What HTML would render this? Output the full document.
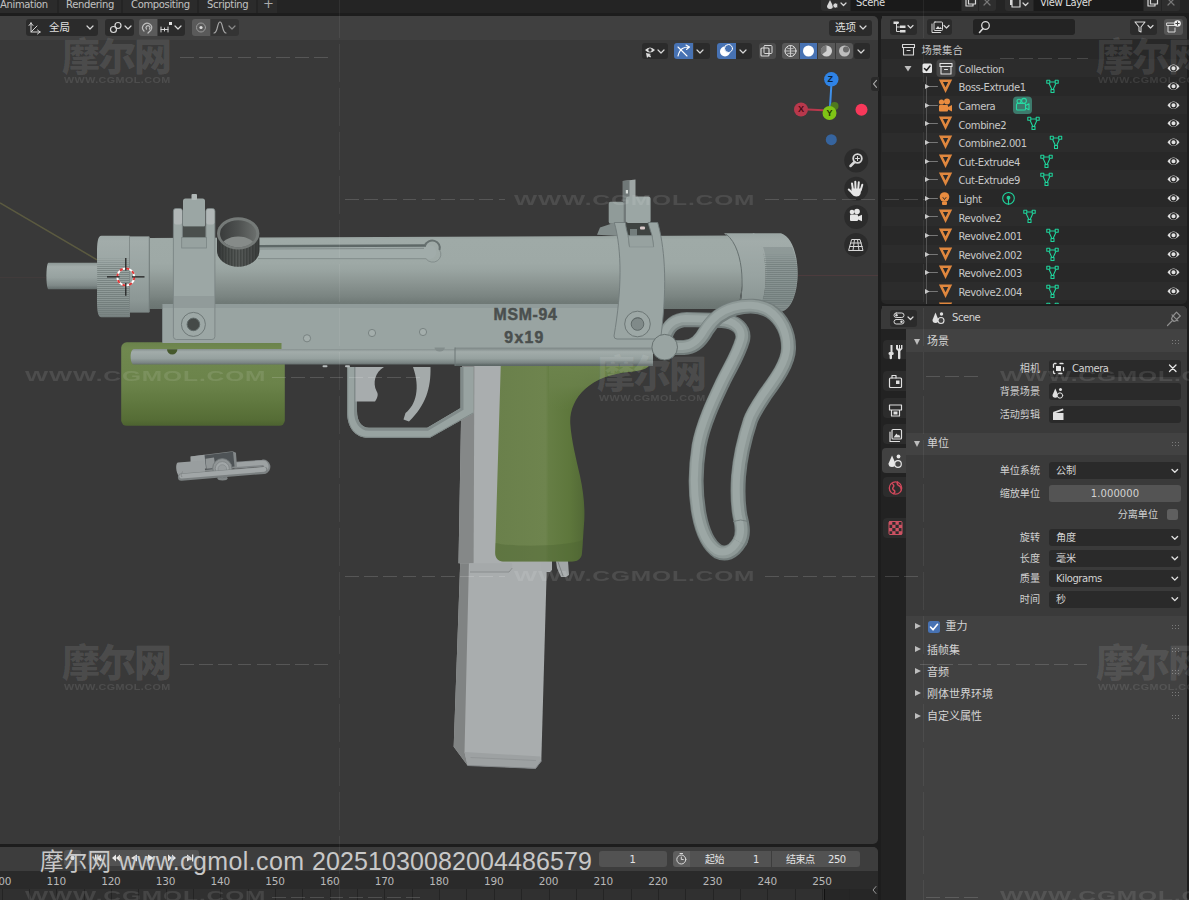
<!DOCTYPE html>
<html lang="zh">
<head>
<meta charset="utf-8">
<title>Blender - MSM-94</title>
<style>
html,body{margin:0;padding:0;}
body{width:1189px;height:900px;overflow:hidden;position:relative;background:#1d1d1d;
  font-family:"DejaVu Sans","Liberation Sans","Noto Sans CJK SC",sans-serif;font-size:11px;color:#d6d6d6;line-height:1;}
.t{position:absolute;white-space:nowrap;}
.box{position:absolute;border-radius:3px;background:#2c2c2c;}
svg{position:absolute;left:0;top:0;overflow:visible;}
svg.ic{fill:none;stroke:#d8d8d8;stroke-width:1.2;stroke-linecap:round;stroke-linejoin:round;}
.chev{position:absolute;width:8px;height:6px;}
/* top bar */
#topbar{position:absolute;left:0;top:0;width:1189px;height:12.800px;background:#242424;}
#topbar .tab{position:absolute;top:0;height:12.800px;background:#2b2b2b;}
#topbar .t{top:0px;font-size:10px;color:#c2c2c2;letter-spacing:-0.35px;}
#topbar .f{position:absolute;top:-6px;height:16.500px;background:#1a1a1a;border-radius:3px;}
#topbar .b{position:absolute;top:-6px;height:16.500px;background:#2e2e2e;border-radius:3px;}
/* viewport */
#vp{position:absolute;left:0;top:16px;width:878px;height:828px;background:#393939;border-radius:0 5px 5px 0;overflow:hidden;}
#vphead{position:absolute;left:0;top:0;width:878px;height:24px;background:rgba(80,80,80,.32);}
/* timeline */
#tl{position:absolute;left:0;top:847px;width:878.400px;height:53px;background:#303030;border-radius:0 5px 0 0;overflow:hidden;}
#tlhead{position:absolute;left:0;top:0;width:878px;height:24px;background:#3d3d3d;}
#tlruler{position:absolute;left:0;top:24px;width:879px;height:18px;background:#2a2a2a;}
#tl .num{position:absolute;top:29px;font-size:10.5px;color:#b8b8b8;transform:translateX(-50%);letter-spacing:-0.2px;}
#tl .vl{position:absolute;top:42px;width:1px;height:11px;background:#242424;}
#tl .fld{position:absolute;top:4px;height:16px;margin-top:0;background:#525252;border-radius:3px;}
#tl .fld .t{top:3.500px;font-size:10px;color:#e4e4e4;}
/* outliner */
#olb{position:absolute;left:880.500px;top:16px;width:306.500px;height:288px;background:#282828;border-radius:5px;overflow:hidden;}
#olb div{height:22.700px;background:#3b3b3b;}
#ol{position:absolute;left:882px;top:16px;width:305px;height:288px;overflow:hidden;border-radius:0 5px 5px 0;}
#olhead{position:absolute;left:0;top:0;width:307px;height:22.700px;background:#3b3b3b;}
.row{position:absolute;left:0;width:307px;height:18.6px;}
.row.alt{background:#2c2c2c;}
.row .t{top:6.200px;font-size:10px;color:#c8c8c8;letter-spacing:-0.4px;}
.row svg{top:0;}
/* properties */
#prb{position:absolute;left:880.500px;top:305.800px;width:306.500px;height:594px;background:#222222;border-radius:5px 5px 0 0;overflow:hidden;}
#prb div{height:23px;background:#393939;}
#pr{position:absolute;left:882px;top:305.800px;width:305px;height:594.200px;background:#414141;border-radius:0 5px 0 0;overflow:hidden;}
#prhead{position:absolute;left:0;top:0;width:307px;height:23px;background:#393939;}
#prtabs{position:absolute;left:0;top:23px;width:24.200px;height:571px;background:#222222;}
#prtabs .tb{position:absolute;left:1px;width:23.200px;height:22px;background:#2c2c2c;border-radius:4px 0 0 4px;}
#prtabs .tb.on{background:#414141;left:0px;width:24.200px;}
.panelh{position:absolute;left:24.200px;width:283px;background:#424242;}
.panelb{position:absolute;left:24.200px;width:283px;background:#3a3a3a;}
.lbl{position:absolute;font-size:10.1px;color:#d0d0d0;text-align:right;width:120px;white-space:nowrap;}
.pt{position:absolute;font-size:11px;color:#d4d4d4;white-space:nowrap;}
.fld{position:absolute;left:167px;width:132px;height:17px;margin-top:-0.5px;border-radius:3px;background:#2a2a2a;}
.fld .t{top:4px;left:7px;font-size:10px;color:#d2d2d2;letter-spacing:-0.45px;}
.c{font-size:10.1px !important;letter-spacing:0 !important;}
.grip{position:absolute;left:289px;width:9px;height:6px;
  background-image:radial-gradient(circle,#7a7a7a 0.7px,transparent 1px);background-size:3px 3px;}
.tri{position:absolute;width:0;height:0;}
.tri.d{border-left:3.5px solid transparent;border-right:3.5px solid transparent;border-top:6px solid #bdbdbd;}
.tri.r{border-top:3.5px solid transparent;border-bottom:3.5px solid transparent;border-left:6px solid #bdbdbd;}
.wm{position:absolute;color:rgba(255,255,255,.10);white-space:nowrap;font-family:"Liberation Sans","Noto Sans CJK SC",sans-serif;}
.wm.big{font-size:38px;font-weight:900;letter-spacing:-2px;font-family:"Noto Sans CJK SC","Liberation Sans",sans-serif;}
.wm.sm{font-size:9.5px;font-weight:bold;letter-spacing:0.4px;transform:scaleX(1.13);transform-origin:0 0;}
.wm.wide{font-size:14px;font-weight:bold;transform:scaleX(1.75);transform-origin:0 0;letter-spacing:0.5px;}
.dash{position:absolute;height:1px;background:repeating-linear-gradient(90deg,rgba(255,255,255,.15) 0 13.700px,transparent 13.700px 19.200px);}
.vdash{position:absolute;top:0;width:1px;height:900px;background:repeating-linear-gradient(180deg,rgba(255,255,255,.06) 0 38px,transparent 38px 44px);}
</style>
</head>
<body>
<div id="topbar">
  <div class="tab" style="left:-4px;width:61px"></div>
  <div class="tab" style="left:59px;width:62px"></div>
  <div class="tab" style="left:123px;width:74px"></div>
  <div class="tab" style="left:199px;width:57px"></div>
  <div class="tab" style="left:258px;width:18.500px"></div>
  <span class="t" style="left:0">Animation</span>
  <span class="t" style="left:66px">Rendering</span>
  <span class="t" style="left:131px">Compositing</span>
  <span class="t" style="left:207px">Scripting</span>
  <span class="t" style="left:263px;font-size:13px;top:-3px;color:#aaa">+</span>
  <div class="b" style="left:821px;width:29px;border-radius:3px 0 0 3px"></div>
  <div class="f" style="left:851px;width:110px;border-radius:0"></div>
  <div class="b" style="left:962px;width:16px;border-radius:0"></div>
  <div class="b" style="left:979px;width:17px;border-radius:0 3px 3px 0"></div>
  <span class="t" style="left:856px;top:-1.800px;color:#ddd">Scene</span>
  <div class="b" style="left:1005px;width:28px;border-radius:3px 0 0 3px"></div>
  <div class="f" style="left:1034px;width:109px;border-radius:0"></div>
  <div class="b" style="left:1144px;width:17px;border-radius:0"></div>
  <div class="b" style="left:1162px;width:18px;border-radius:0 3px 3px 0"></div>
  <span class="t" style="left:1040px;top:-1.800px;color:#ddd">View Layer</span>
  <svg class="ic" width="1189" height="14" viewBox="0 0 1189 14">
    <!-- scene icon -->
    <path d="M827 6 l3 -6 l3 6 a3 3 0 0 1 -6 0z" fill="#d8d8d8" stroke="none"/>
    <circle cx="835.5" cy="5.5" r="2.6" fill="#d8d8d8" stroke="#2e2e2e" stroke-width="0.8"/>
    <path d="M841 3 l2.5 2.5 l2.5 -2.5"/>
    <!-- copy icons -->
    <rect x="966" y="-2" width="7" height="8" /><rect x="968.5" y="-4" width="7" height="8" fill="#2e2e2e"/>
    <path d="M984 -1 l6 6 m0 -6 l-6 6" stroke="#777"/>
    <!-- view layer icon -->
    <rect x="1010" y="-3" width="8" height="8" fill="#d8d8d8" stroke="none"/><rect x="1012" y="-1" width="8" height="8" fill="#2e2e2e"/>
    <path d="M1023 3 l2.5 2.5 l2.5 -2.5"/>
    <rect x="1148" y="-2" width="7" height="8" /><rect x="1150.5" y="-4" width="7" height="8" fill="#2e2e2e"/>
    <path d="M1168 -1 l6 6 m0 -6 l-6 6" stroke="#777"/>
  </svg>
</div>
<div id="vp">
<svg id="gun" width="878" height="828" viewBox="0 16 878 828">
<defs>
  <linearGradient id="gTube" x1="0" y1="236" x2="0" y2="309" gradientUnits="userSpaceOnUse">
    <stop offset="0" stop-color="#98a3a0"/><stop offset="0.05" stop-color="#9faaa7"/><stop offset="0.37" stop-color="#9ea9a6"/><stop offset="0.47" stop-color="#99a4a1"/>
    <stop offset="0.64" stop-color="#8b9592"/><stop offset="0.74" stop-color="#828c89"/><stop offset="0.83" stop-color="#7a8481"/><stop offset="0.9" stop-color="#717b78"/><stop offset="1" stop-color="#6a7471"/>
  </linearGradient>
  <linearGradient id="gCap" x1="0" y1="233" x2="0" y2="317" gradientUnits="userSpaceOnUse">
    <stop offset="0" stop-color="#9aa5a3"/><stop offset="0.1" stop-color="#a2acaa"/><stop offset="0.5" stop-color="#98a3a1"/>
    <stop offset="0.8" stop-color="#8c9795"/><stop offset="1" stop-color="#798382"/>
  </linearGradient>
  <linearGradient id="gBarrel" x1="0" y1="262.8" x2="0" y2="289.3" gradientUnits="userSpaceOnUse">
    <stop offset="0" stop-color="#8c9795"/><stop offset="0.15" stop-color="#a2acaa"/><stop offset="0.55" stop-color="#97a2a0"/>
    <stop offset="0.85" stop-color="#7f8988"/><stop offset="1" stop-color="#636d6c"/>
  </linearGradient>
  <linearGradient id="gRod" x1="0" y1="348.500" x2="0" y2="365" gradientUnits="userSpaceOnUse">
    <stop offset="0" stop-color="#838d8c"/><stop offset="0.2" stop-color="#a2acaa"/><stop offset="0.6" stop-color="#96a19f"/>
    <stop offset="0.88" stop-color="#798382"/><stop offset="1" stop-color="#5e6867"/>
  </linearGradient>
  <linearGradient id="gGreenH" x1="0" y1="342" x2="0" y2="426" gradientUnits="userSpaceOnUse">
    <stop offset="0" stop-color="#6a824b"/><stop offset="0.08" stop-color="#70884f"/><stop offset="0.5" stop-color="#6b834a"/>
    <stop offset="0.72" stop-color="#60783f"/><stop offset="0.92" stop-color="#566d36"/><stop offset="1" stop-color="#4c6230"/>
  </linearGradient>
  <linearGradient id="gGrip" x1="495" y1="0" x2="588" y2="0" gradientUnits="userSpaceOnUse">
    <stop offset="0" stop-color="#6a804b"/><stop offset="0.545" stop-color="#6e844e"/><stop offset="0.575" stop-color="#667e45"/>
    <stop offset="0.8" stop-color="#5e773c"/><stop offset="0.93" stop-color="#556c37"/><stop offset="1" stop-color="#495f30"/>
  </linearGradient>
  <linearGradient id="gMag" x1="455" y1="0" x2="548" y2="0" gradientUnits="userSpaceOnUse">
    <stop offset="0" stop-color="#939798"/><stop offset="0.13" stop-color="#9a9e9f"/><stop offset="0.15" stop-color="#aaaeaf"/>
    <stop offset="0.8" stop-color="#a7abac"/><stop offset="1" stop-color="#a1a5a6"/>
  </linearGradient>
  <linearGradient id="gKnurlFade" x1="0" y1="0" x2="0" y2="1">
    <stop offset="0" stop-color="#fff" stop-opacity="0"/><stop offset="0.25" stop-color="#fff" stop-opacity="0"/>
    <stop offset="0.4" stop-color="#fff" stop-opacity="1"/><stop offset="0.85" stop-color="#fff" stop-opacity="1"/><stop offset="1" stop-color="#fff" stop-opacity="0.3"/>
  </linearGradient>
  <pattern id="pKnurlH" width="4" height="2" patternUnits="userSpaceOnUse"><rect width="4" height="1" fill="#636d6c" fill-opacity="0.55"/></pattern>
  <pattern id="pKnurlV" width="1.500" height="4" patternUnits="userSpaceOnUse"><rect width="0.700" height="4" fill="#2c2f2e" fill-opacity="0.65"/></pattern>
  <mask id="mKn1" maskUnits="userSpaceOnUse" x="90" y="230" width="50" height="90"><rect x="90" y="236" width="50" height="82" fill="url(#gKnurlFade)"/></mask>
  <mask id="mKn2" maskUnits="userSpaceOnUse" x="750" y="230" width="50" height="90"><rect x="750" y="233" width="50" height="79" fill="url(#gKnurlFade)"/></mask>
  <linearGradient id="gKnobSide" x1="217" y1="0" x2="259.500" y2="0" gradientUnits="userSpaceOnUse">
    <stop offset="0" stop-color="#353838"/><stop offset="0.25" stop-color="#4c504e"/><stop offset="0.5" stop-color="#5c605e"/><stop offset="0.8" stop-color="#4b4e4d"/><stop offset="1" stop-color="#3a3d3c"/>
  </linearGradient>
  <linearGradient id="gKnobIn" x1="220" y1="0" x2="257" y2="0" gradientUnits="userSpaceOnUse">
    <stop offset="0" stop-color="#3a3c3c"/><stop offset="0.5" stop-color="#4e5150"/><stop offset="1" stop-color="#6c706e"/>
  </linearGradient>
</defs>
<!-- axis / helper lines -->
<line x1="0" y1="277.500" x2="46" y2="277.500" stroke="#413b3b" stroke-width="1"/>
<line x1="798" y1="275.500" x2="878" y2="275.500" stroke="#4c3b3d" stroke-width="1"/>
<line x1="0" y1="202.900" x2="97" y2="259.800" stroke="#5b5a40" stroke-width="1.500"/>
<!-- wire stock: far strand (behind) -->
<g fill="none" stroke-linecap="round" stroke-linejoin="round">
  <path id="wfar" d="M665 337 C668 327 674 320 687 319.500 L722 320.500 C736 321.500 745 329 742.500 340 C738 356 729 369 722.500 383 C714 401 703 424 699 446 C695.500 468 695 492 699 514 C702 530 708 545 718 551.500 C725 555 733 553 739.500 542 L740.500 540.300"/>
</g>
<use href="#wfar" fill="none" stroke="#737d7c" stroke-width="15" stroke-linecap="round"/>
<use href="#wfar" fill="none" stroke="#8e9997" stroke-width="12" stroke-linecap="round" transform="translate(-0.800,-0.500)"/>
<use href="#wfar" fill="none" stroke="#9ca7a5" stroke-width="7" stroke-linecap="round" transform="translate(-1.800,-1)"/>
<!-- barrel tip -->
<path d="M48.500 262.800 L98 262.800 L98 289.300 L48.500 289.300 C45.700 289.300 45.700 262.800 48.500 262.800 Z" fill="url(#gBarrel)"/>
<!-- tube sections -->
<path d="M149 238 L735 235.600 L745 270 L738 309 L149 309 Z" fill="url(#gTube)"/>
<!-- front ring -->
<rect x="129.300" y="236.400" width="20" height="76.200" fill="url(#gCap)"/>
<path d="M149.300 237 V312" stroke="#717b7a" stroke-width="1" fill="none"/>
<!-- front knurled cap -->
<path d="M101.500 235.800 L129.500 235.800 L129.500 317.300 L101.500 317.300 C95.500 317.300 97.200 300 97.200 276.500 C97.200 253 95.500 235.800 101.500 235.800 Z" fill="url(#gCap)"/>
<path d="M101.500 235.800 L129.500 235.800 L129.500 317.300 L101.500 317.300 C95.500 317.300 97.200 300 97.200 276.500 C97.200 253 95.500 235.800 101.500 235.800 Z" fill="url(#pKnurlH)" mask="url(#mKn1)"/>
<path d="M129.500 236.500 V317" stroke="#7e8887" stroke-width="0.800" fill="none"/>
<!-- lower receiver top overlap line -->
<path d="M162.500 304.600 H660" stroke="#6e7877" stroke-width="1" fill="none" stroke-opacity="0.700"/>
<!-- slot -->
<path d="M258 246 L426 245.400 A7.500 7.200 0 1 1 426 258.700 L258 258.600 Z" fill="#a1acaa"/>
<path d="M258 246.300 L426 245.500" fill="none" stroke="#5e6867" stroke-width="2.600"/>
<path d="M425 245.600 A7.500 7.200 0 0 1 439.500 250" fill="none" stroke="#677170" stroke-width="2"/>
<path d="M258 258.600 L426 258.700 A7.500 7.200 0 0 0 439.500 250" fill="none" stroke="#808a89" stroke-width="0.900"/>
<path d="M258 249 L424 248.400" fill="none" stroke="#848e8d" stroke-width="1.200"/>
<!-- rear smooth ring -->
<path d="M724 233.200 L754 233.200 C769 245 769 300 757.500 311.400 L738.500 309 C744 300 746.500 250 724 233.200 Z" fill="url(#gCap)"/>
<path d="M726 234 C746.500 250 744 300 737 308.500" stroke="#677170" stroke-width="1" fill="none"/>
<!-- rear knurled cap -->
<path d="M752.500 233.200 L781 233.200 C803 240 803 305 782.200 311.400 L757 311.400 C769 300 769 245 752.500 233.200 Z" fill="url(#gCap)"/>
<path d="M752.500 233.200 L781 233.200 C803 240 803 305 782.200 311.400 L757 311.400 C769 300 769 245 752.500 233.200 Z" fill="url(#pKnurlH)" mask="url(#mKn2)"/>
<path d="M763 247 C768 260 768 285 761 304 L790 304 C799 290 799 262 792 247 Z" fill="#717b7a" fill-opacity="0.350"/>
<!-- magazine -->
<path d="M460.300 560 L547 560 L541.300 761 L535.500 768.400 L467.600 765.500 L453.700 746.700 Z" fill="#a9adae"/>
<path d="M460.300 560 L469 560 L464.500 752 L467.600 765.500 L453.700 746.700 Z" fill="#808383"/>
<path d="M464.500 752 L540.500 756.500 L541.300 761 L535.500 768.400 L467.600 765.500 Z" fill="#9da1a2"/>
<path d="M467.600 765.500 L535.500 768.400 L541.300 761" fill="none" stroke="#818587" stroke-width="1"/>
<path d="M470.500 757.500 L536 760.500" fill="none" stroke="#8e9293" stroke-width="0.800"/>
<!-- mag well / grip frame -->
<path d="M462 366 L501 366 L501 572 L470 572 L470 563.300 L458.500 563.300 Z" fill="#aaaeaf"/>
<path d="M462 366 L474.400 366 L473.600 563.300 L458.500 563.300 Z" fill="#858888"/>
<path d="M470 563.300 L512 563.300 L512.300 568 L509 572 L470 572 Z" fill="#a5a9aa"/>
<path d="M470 572 L509 572 L512.300 568" fill="none" stroke="#838788" stroke-width="0.800"/>
<!-- small tabs below grip -->
<path d="M541 561 h11 v9 l-2 2 h-7 l-2 -2z" fill="#a8acad"/>
<path d="M556 561 h12 l1 14 l-3 2 h-5 l-4 -9z" fill="#a2a6a7"/><path d="M558 562 l5 14" stroke="#7e8283" stroke-width="1" fill="none"/>
<!-- green pistol grip -->
<path d="M500.800 364 L650 364 C648 369 640 371 628 372 C612 373.500 596 379 585 389 C574 399 569.500 412 570.300 424 C571.500 441 576 458 580 476 C583 490 585 504 584.300 520 L582 553 C581.500 558.500 578 561.500 572 561.500 L503 561.500 C498 561.500 495 558 495.200 552 Z" fill="url(#gGrip)"/>
<clipPath id="cGrip"><path d="M500.800 364 L650 364 C648 369 640 371 628 372 C612 373.500 596 379 585 389 C574 399 569.500 412 570.300 424 C571.500 441 576 458 580 476 C583 490 585 504 584.300 520 L582 553 C581.500 558.500 578 561.500 572 561.500 L503 561.500 C498 561.500 495 558 495.200 552 Z"/></clipPath>
<linearGradient id="gTang" x1="0" y1="366" x2="0" y2="410" gradientUnits="userSpaceOnUse"><stop offset="0" stop-color="#6c834c" stop-opacity="1"/><stop offset="0.45" stop-color="#6a814a" stop-opacity="0.9"/><stop offset="1" stop-color="#667e45" stop-opacity="0"/></linearGradient>
<rect x="549" y="364" width="102" height="48" fill="url(#gTang)" clip-path="url(#cGrip)"/>
<path d="M584.300 520 L582 553 C581.500 558.500 578 561.500 572 561.500 L503 561.500 C498 561.500 495 558 495.200 552 L495.600 543 C510 547 565 547 583 540Z" fill="#4a6030" fill-opacity="0.350"/>
<!-- trigger guard -->
<path d="M347.200 367 L347.200 413 C347.200 427 355 437.800 368 437.800 L430 437.800 L473.600 413.300 L473.600 367 L460.500 367 L460.500 408 L427.200 427.800 L369 427.800 C361 427.800 357 421 357 411 L357 367 Z" fill="#98a3a1"/>
<path d="M462 367 L462 409 L427.600 429.300 L369 429.300 C360 429.300 355.500 421 355.500 411 L355.500 367" fill="none" stroke="#818b8a" stroke-width="3"/>
<path d="M347.700 367 L347.700 413 C347.700 427 355 437.300 368 437.300 L430 437.300 L473.100 413" fill="none" stroke="#7e8887" stroke-width="1"/>
<!-- inner plate with round cutout + trigger -->
<path d="M355.500 367 L384 367 C375 372 372.500 383 376.500 391 C378.500 394 378 397 375 401.500 L355.500 401.500 Z" fill="#a7acad"/>
<path d="M413 367 L430.500 367 C431 388 426 405 409 421.500 L403.500 419.500 L405.500 413 C416 405 420.500 388 413 367 Z" fill="#a4aaaa"/>
<!-- tiny studs -->
<rect x="322.500" y="365.300" width="5" height="2" rx="1" fill="#b6bcbc"/><rect x="345" y="365.300" width="5" height="2" rx="1" fill="#b6bcbc"/>
<!-- green handguard -->
<rect x="121.200" y="342.300" width="163.600" height="83.500" rx="5.500" fill="url(#gGreenH)"/>
<!-- lower receiver -->
<path d="M162.500 304 L660 304 L660 349.500 L281.500 349.500 L281.500 343 L162.500 343 Z" fill="#99a4a2"/>
<path d="M162.500 304 L660 304 L660 308 L162.500 308 Z" fill="#8b9694" fill-opacity="0.600"/>
<path d="M162.500 304.500 V343" stroke="#808a89" stroke-width="1" fill="none"/>
<!-- pins -->
<g fill="#a4aeac" stroke="#798382" stroke-width="1"><circle cx="307" cy="338.300" r="3.600"/><circle cx="372" cy="333" r="3.600"/><circle cx="423" cy="332" r="3.600"/></g>
<!-- rod -->
<path d="M134 349 L455 349 L455 347.500 L653 347.500 L653 366 L455 366 L455 364.600 L134 364.600 C129.500 364.600 129.500 349 134 349 Z" fill="url(#gRod)"/>
<path d="M455 347.500 V366" stroke="#6d7776" stroke-width="1" fill="none"/>
<path d="M167 349.300 a5.200 5.200 0 0 0 10.400 0z" fill="#46592c"/>
<path d="M434.500 347.500 a5.200 4 0 0 0 10.400 0z" fill="#838d8c"/>
<!-- engraved text -->
<text x="525.500" y="319.700" text-anchor="middle" font-family="'Liberation Sans',sans-serif" font-weight="bold" font-size="15.800" letter-spacing="0.700" fill="#4a4f4e" stroke="#4a4f4e" stroke-width="0.500">MSM-94</text>
<text x="524.500" y="342.800" text-anchor="middle" font-family="'Liberation Sans',sans-serif" font-weight="bold" font-size="15.800" letter-spacing="1.300" fill="#4a4f4e" stroke="#4a4f4e" stroke-width="0.500">9x19</text>
<!-- front sight -->
<rect x="183" y="198.600" width="22" height="29" rx="2.500" fill="#9ba6a4"/>
<rect x="191.500" y="194" width="5.500" height="6" rx="1" fill="#b0b8b7"/>
<rect x="182" y="226.400" width="24" height="12" fill="#4a4f4d"/>
<path d="M173.400 211 a2.500 2.500 0 0 1 2.500 -2.500 h4 a2.500 2.500 0 0 1 2.500 2.500 V238 h23.500 V211 a2.500 2.500 0 0 1 2.500 -2.500 h4 a2.500 2.500 0 0 1 2.500 2.500 V336.500 a3 3 0 0 1 -3 3 H176.400 a3 3 0 0 1 -3 -3 Z" fill="#9ca7a5"/>
<path d="M173.400 211 a2.500 2.500 0 0 1 2.500 -2.500 h4 a2.500 2.500 0 0 1 2.500 2.500 V238 h23.500 V211 a2.500 2.500 0 0 1 2.500 -2.500 h4 a2.500 2.500 0 0 1 2.500 2.500 V336.500 a3 3 0 0 1 -3 3 H176.400 a3 3 0 0 1 -3 -3 Z" fill="none" stroke="#7b8584" stroke-width="0.900"/>
<rect x="174" y="209" width="8" height="15.500" rx="2" fill="#b1b7b7"/><rect x="206.400" y="209" width="8" height="15.500" rx="2" fill="#b1b7b7"/>
<rect x="181.700" y="237.500" width="24.800" height="10.500" fill="#97a2a0" stroke="#7b8584" stroke-width="0.800"/>
<path d="M174 296 H214.400 V308 H174Z" fill="#7e8887" fill-opacity="0.350"/>
<circle cx="193.400" cy="324.400" r="12" fill="#9da8a6" stroke="#6f7978" stroke-width="1"/>
<circle cx="193.400" cy="324.400" r="6.300" fill="#454a48" stroke="#616b6a" stroke-width="1"/>
<!-- charging knob -->
<path d="M217 233.400 V250.700 A21.200 16.100 0 0 0 259.400 250.700 V233.400 Z" fill="url(#gKnobSide)"/>
<path d="M217 233.400 V250.700 A21.200 16.100 0 0 0 259.400 250.700 V233.400 Z" fill="url(#pKnurlV)"/>
<ellipse cx="238.200" cy="233.400" rx="21.200" ry="16.100" fill="#757a78"/>
<ellipse cx="238.200" cy="233.800" rx="18.200" ry="13.500" fill="url(#gKnobIn)"/>
<clipPath id="cKnob"><ellipse cx="238.200" cy="233.800" rx="18.200" ry="13.500"/></clipPath>
<ellipse cx="238.200" cy="248" rx="17.500" ry="11.500" fill="#868b89" clip-path="url(#cKnob)"/>
<!-- rear sight -->
<path d="M622.800 181 L635.500 179.600 L635.500 222 L622.800 222 Z" fill="#9da5a4"/>
<path d="M622.800 181 L629.500 180.300 L629.500 222 L622.800 222 Z" fill="#707878"/>
<rect x="625.800" y="190" width="2.200" height="3.500" fill="#d5dad7"/>
<rect x="608.700" y="201.800" width="15" height="22" rx="2" fill="#909b99"/>
<rect x="625.900" y="196.400" width="24.700" height="26.500" rx="2.500" fill="#9ba6a4"/>
<path d="M597 234.800 L600 227.500 L615 222.500 L618 236 Z" fill="#828c8b"/>
<path d="M624 223 H650 V237 H624Z" fill="#3e4341"/>
<rect x="640" y="226.500" width="5" height="3" rx="1" fill="#d9c9c9"/><rect x="630" y="229" width="7" height="7" fill="#737d7c"/>
<path d="M614.300 222.500 L625.400 222.500 C626 228 627 232 628.200 235.600 L629.500 246.700 L653.600 246.700 L652 235.600 C650.500 231 649 226 648 222.500 L657.700 222.500 C664 245 668 280 661 336 a3 3 0 0 1 -3 3 L617 339 a3 3 0 0 1 -3 -3 C622 290 622 250 614.300 222.500 Z" fill="#9aa5a3" stroke="#717b7a" stroke-width="0.900"/>
<path d="M629.500 246.700 L628.200 235.600 H652 L653.600 246.700" fill="#97a2a0" stroke="#7b8584" stroke-width="0.800"/>
<circle cx="637.500" cy="324" r="12.800" fill="#9da8a6" stroke="#6d7776" stroke-width="1"/>
<circle cx="637.500" cy="324" r="6.300" fill="#808a89" stroke="#616b6a" stroke-width="1"/>
<path d="M632 322 a6.300 6.300 0 0 1 11 -2 a7 7 0 0 0 -11 2z" fill="#5e6867"/>
<!-- wire stock: near strand -->
<path id="wnear" d="M663 347.500 L684 347.500 C695 347 701 340 706 331 C712 321 722 312 735 308.300 C746 305.300 760 305 770 311 C782 319 789 333 788.500 349 C788 364 775 381 764.400 395.800 C757 407 752.500 414 750.400 420.600 C744 440 740 458 738.500 476.600 C737.500 492 738 505 740 516 C741.500 523 744.800 533 739.500 542" fill="none"/>
<use href="#wnear" fill="none" stroke="#737d7c" stroke-width="15" stroke-linecap="butt"/>
<use href="#wnear" fill="none" stroke="#8e9997" stroke-width="12" stroke-linecap="butt" transform="translate(-0.800,-0.500)"/>
<use href="#wnear" fill="none" stroke="#9ca7a5" stroke-width="7" stroke-linecap="butt" transform="translate(-1.800,-1)"/>
<path d="M733 521.500 q7.500 -3 15.500 0" stroke="#707a79" stroke-width="0.900" fill="none"/>
<circle cx="664.700" cy="347.200" r="12.800" fill="#99a4a2" stroke="#687271" stroke-width="1"/>
<!-- 3d cursor -->
<g fill="none">
  <circle cx="125.800" cy="276.900" r="8.500" stroke="#fff" stroke-width="2"/>
  <circle cx="125.800" cy="276.900" r="8.500" stroke="#e03a3a" stroke-width="2" stroke-dasharray="3.300 3.370"/>
  <path d="M107 276.900 H119.500 M132 276.900 H144.500 M125.800 258 V270.500 M125.800 283 V295.700" stroke="#1c1c1c" stroke-width="1.200"/>
</g>
<!-- sling swivel (loose part) -->
<ellipse cx="222.500" cy="478.300" rx="5" ry="2.200" fill="#7f8485"/>
<path d="M236 465.300 L262.500 463.200 A3.600 3.600 0 0 1 264 470.300" fill="none" stroke="#808587" stroke-width="7" stroke-linecap="round"/>
<path d="M236 464.800 L262.500 462.700 A3.600 3.600 0 0 1 264.300 469.500" fill="none" stroke="#9da2a3" stroke-width="4.500" stroke-linecap="round"/>
<path d="M190.600 456.500 L232.500 451.200 L236 452.800 L237 468 L204 472 L190.600 468 Z" fill="#838889"/>
<path d="M203.500 455.500 L233 451.800 L234.500 466.500 L205 470 Z" fill="#4e5356"/>
<path d="M190.600 456.500 L204.500 454.800 L206 468.500 L191 468.500 Z" fill="#9ca1a2"/>
<path d="M205.500 458.800 L214 457.600 L215.500 468 L206.500 468.800 Z" fill="#919697"/>
<circle cx="222.300" cy="468.200" r="9.600" fill="#909596" stroke="#717677" stroke-width="0.900"/>
<circle cx="222.300" cy="468.600" r="7" fill="#a1a6a7" stroke="#7e8384" stroke-width="0.800"/>
<circle cx="222.300" cy="469" r="4.300" fill="#979c9d" stroke="#838889" stroke-width="0.700"/>
<path d="M178 462.500 L204 460.500 L205.500 476 L183 478.500 C176 478.500 174.500 463 178 462.500 Z" fill="#999e9f"/>
<path d="M181.500 477.200 L264 470.300" fill="none" stroke="#7b8081" stroke-width="7.200" stroke-linecap="round"/>
<path d="M181.500 476.300 L264 469.400" fill="none" stroke="#a1a6a7" stroke-width="4.600" stroke-linecap="round"/>
<path d="M183 471.500 C181 473 180.500 475 182 477" fill="none" stroke="#828788" stroke-width="0.900"/>
</svg>
<div id="vphead"></div>
</div><!-- /vp -->
<!-- viewport header widgets (page coords) -->
<div class="box" style="left:26px;top:19px;width:72px;height:17px;background:#2b2b2b"></div>
<span class="t" style="left:49px;top:22px;font-size:10.5px;color:#e0e0e0">全局</span>
<div class="box" style="left:105px;top:19px;width:29px;height:17px;background:#2b2b2b"></div>
<div class="box" style="left:139px;top:19px;width:18px;height:17px;background:#5a5a5a;border-radius:3px 0 0 3px"></div>
<div class="box" style="left:158px;top:19px;width:27px;height:17px;background:#2b2b2b;border-radius:0 3px 3px 0"></div>
<div class="box" style="left:192px;top:19px;width:18px;height:17px;background:#5a5a5a;border-radius:3px 0 0 3px"></div>
<div class="box" style="left:211px;top:19px;width:28px;height:17px;background:#343434;border-radius:0 3px 3px 0"></div>
<div class="box" style="left:829px;top:20px;width:43px;height:16px;background:#2b2b2b"></div>
<span class="t" style="left:835px;top:22px;font-size:10.5px;color:#e0e0e0">选项</span>
<!-- second row -->
<div class="box" style="left:642px;top:43px;width:26px;height:16px;background:#2b2b2b"></div>
<div class="box" style="left:674px;top:43px;width:19px;height:16px;background:#4772b3;border-radius:3px 0 0 3px"></div>
<div class="box" style="left:694px;top:43px;width:16px;height:16px;background:#2b2b2b;border-radius:0 3px 3px 0"></div>
<div class="box" style="left:717px;top:43px;width:19px;height:16px;background:#4772b3;border-radius:3px 0 0 3px"></div>
<div class="box" style="left:736px;top:43px;width:16px;height:16px;background:#2b2b2b;border-radius:0 3px 3px 0"></div>
<div class="box" style="left:758.500px;top:43px;width:17px;height:16px;background:#4c4c4c"></div>
<div class="box" style="left:782px;top:43px;width:17px;height:16px;background:#585858;border-radius:3px 0 0 3px"></div>
<div class="box" style="left:800px;top:43px;width:17px;height:16px;background:#4772b3;border-radius:0"></div>
<div class="box" style="left:818px;top:43px;width:17px;height:16px;background:#585858;border-radius:0"></div>
<div class="box" style="left:836px;top:43px;width:17px;height:16px;background:#585858;border-radius:0 3px 3px 0"></div>
<div class="box" style="left:853.500px;top:43px;width:16.500px;height:16px;background:#2b2b2b"></div>
<div class="box" style="left:871px;top:77px;width:8px;height:13.500px;background:#2a2a2a;border-radius:3px 0 0 3px"></div>
<svg class="ic" width="878" height="300" viewBox="0 0 878 300">
  <!-- header row 1 icons -->
  <path d="M31 23 v9 h9 M31 23 l-2 2.5 M31 23 l2 2.5 M40 32 l-2.5 -2 M40 32 l-2.5 2 M31 32 l6 -6" stroke-width="1"/>
  <path d="M87 26 l3 3 l3 -3"/>
  <circle cx="113.5" cy="29.5" r="3"/><circle cx="118" cy="25.5" r="3"/>
  <path d="M125 26 l3 3 l3 -3"/>
  <path d="M144 31 a4.5 4.5 0 1 1 7 -1 l-3 3 M146.5 29 a2 2 0 1 1 3 0" stroke="#bdbdbd"/>
  <path d="M161 27 v5 M168 27 v5 M161 29.500 h7 M164.500 28 v3" stroke-width="1"/><rect x="169" y="22" width="3" height="3" fill="#e0e0e0" stroke="none"/>
  <path d="M175 26 l3 3 l3 -3"/>
  <circle cx="201" cy="27.5" r="4.5" stroke="#9a9a9a" stroke-width="1"/><circle cx="201" cy="27.5" r="1.6" fill="#ddd" stroke="none"/>
  <path d="M214 33 c4 0 3 -11 6 -11 s2 11 6 11" stroke="#a8a8a8"/>
  <path d="M229 26 l3 3 l3 -3" stroke="#8a8a8a"/>
  <path d="M860 26 l3 3 l3 -3"/>
  <!-- row 2 icons -->
  <path d="M645 50 q5 -5 10 0 q-5 5 -10 0z" fill="#ddd" stroke="none"/><circle cx="650" cy="50" r="1.7" fill="#2b2b2b" stroke="none"/>
  <path d="M646 53 l1 5 l1.500 -1.500 l2 1 l0.500 -1.500 l-1.500 -1 l1.500 -1z" fill="#ddd" stroke="none"/>
  <path d="M658 50 l3 3 l3 -3"/>
  <path d="M678 56 c2 -8 6 -9 11 -9 M686 45 l3.500 2 l-3 2.500 M678 47 l9 9" stroke="#fff" stroke-width="1.1"/>
  <path d="M697 50 l3 3 l3 -3"/>
  <circle cx="725" cy="51.5" r="5" fill="#fff" stroke="none"/><circle cx="728.500" cy="48.500" r="4" fill="#4772b3" stroke="#fff" stroke-width="1"/>
  <path d="M740 50 l3 3 l3 -3"/>
  <rect x="761" y="48" width="8" height="8" rx="1"/><rect x="764" y="45.500" width="8" height="8" rx="1" stroke-width="1"/>
  <circle cx="790.5" cy="51" r="5.500" stroke="#e0e0e0" stroke-width="1"/><path d="M785 51 h11 M790.500 45.500 v11 M786.500 47.500 q4 3 8 0 M786.500 54.500 q4 -3 8 0" stroke-width="0.8"/>
  <circle cx="808.500" cy="51" r="5.500" fill="#fff" stroke="none"/>
  <circle cx="826.500" cy="51" r="5.500" fill="#d0d0d0" stroke="none"/><path d="M826.500 51 L826.500 45.500 A5.500 5.500 0 0 0 822 54.500 z" fill="#777" stroke="none"/>
  <circle cx="844.500" cy="51" r="5.500" fill="#bdbdbd" stroke="none"/><circle cx="846" cy="49.500" r="3" fill="#6a6a6a" stroke="none"/>
  <path d="M858 50 l3 3 l3 -3"/>
  <!-- gizmo -->
  <line x1="831.3" y1="86" x2="830" y2="107" stroke="#3f8fe8" stroke-width="2"/>
  <line x1="808" y1="109.500" x2="823" y2="110.300" stroke="#b8384c" stroke-width="2"/>
  <circle cx="834.500" cy="106" r="4" fill="#4f7a1e" stroke="none"/>
  <circle cx="831.3" cy="79.300" r="7.200" fill="#2f83e6" stroke="none"/>
  <circle cx="829.500" cy="113" r="7" fill="#7fc416" stroke="none"/>
  <circle cx="801" cy="109.500" r="7" fill="#b8384c" stroke="none"/>
  <circle cx="861.500" cy="109.800" r="6" fill="#f8385a" stroke="none"/>
  <circle cx="831.3" cy="139.700" r="5.500" fill="#36649e" stroke="none"/>
  <!-- nav buttons -->
  <g fill="#2b2b2b" stroke="none"><circle cx="856.200" cy="160.500" r="12"/><circle cx="856.200" cy="188.800" r="12"/><circle cx="856.200" cy="217" r="12"/><circle cx="856.200" cy="245" r="12"/></g>
  <circle cx="857.500" cy="158.500" r="4.300" stroke-width="1.800"/><path d="M854.500 162 l-4 4" stroke-width="2.500"/><path d="M855.500 158.500 h4 M857.500 156.500 v4" stroke-width="1"/>
  <g stroke="#e6e6e6" stroke-width="2" stroke-linecap="round"><path d="M853 190 L852 183.500 M855.500 189 L855.300 181.800 M858.200 189 L858.800 182.300 M860.600 190.500 L862.300 184.800 M852.500 193 L848.800 189.500"/></g><path d="M851.500 188.500 h9.800 l-0.800 5.500 q-1 2.500 -4 2.500 q-3.500 0 -5 -3z" fill="#e6e6e6" stroke="none"/>
  <rect x="850" y="214.500" width="8" height="6.500" rx="1" fill="#e6e6e6" stroke="none"/><path d="M858 216.500 l4 -1.800 v6.500 l-4 -1.800z" fill="#e6e6e6" stroke="none"/><circle cx="852" cy="212" r="2.300" fill="#e6e6e6" stroke="none"/><circle cx="857" cy="211.500" r="2.800" fill="#e6e6e6" stroke="none"/>
  <path d="M852 239.500 h8 l3 11 h-14 z M850.800 243 h10.500 M849.800 246.500 h12.500 M854.500 239.500 l-1.500 11 M857.500 239.500 l1.500 11" stroke-width="1"/>
  <path d="M876.500 80.300 l-3 3.500 l3 3.500" stroke="#aaa" stroke-width="1.100"/>
</svg>
<span class="t" style="left:827.5px;top:74.500px;font-size:9px;font-weight:bold;color:#0b2238;font-family:'Liberation Sans',sans-serif">Z</span>
<span class="t" style="left:826.5px;top:108.500px;font-size:9px;font-weight:bold;color:#1f3a00;font-family:'Liberation Sans',sans-serif">Y</span>
<span class="t" style="left:798px;top:105px;font-size:9px;font-weight:bold;color:#4a0a14;font-family:'Liberation Sans',sans-serif">X</span>
<div id="tl"><div id="tlhead"></div><div id="tlruler"></div>
<div style="position:absolute;left:823.500px;top:42px;width:60px;height:11px;background:#262626;border-left:1px solid #111"></div>
<span class="num" style="left:1.5px">100</span>
<div class="vl" style="left:1.5px"></div><div class="vl" style="left:28.9px"></div>
<span class="num" style="left:56.2px">110</span>
<div class="vl" style="left:56.2px"></div><div class="vl" style="left:83.5px"></div>
<span class="num" style="left:110.9px">120</span>
<div class="vl" style="left:110.9px"></div><div class="vl" style="left:138.2px"></div>
<span class="num" style="left:165.6px">130</span>
<div class="vl" style="left:165.6px"></div><div class="vl" style="left:192.9px"></div>
<span class="num" style="left:220.3px">140</span>
<div class="vl" style="left:220.3px"></div><div class="vl" style="left:247.6px"></div>
<span class="num" style="left:275.0px">150</span>
<div class="vl" style="left:275.0px"></div><div class="vl" style="left:302.4px"></div>
<span class="num" style="left:329.7px">160</span>
<div class="vl" style="left:329.7px"></div><div class="vl" style="left:357.1px"></div>
<span class="num" style="left:384.4px">170</span>
<div class="vl" style="left:384.4px"></div><div class="vl" style="left:411.8px"></div>
<span class="num" style="left:439.1px">180</span>
<div class="vl" style="left:439.1px"></div><div class="vl" style="left:466.4px"></div>
<span class="num" style="left:493.8px">190</span>
<div class="vl" style="left:493.8px"></div><div class="vl" style="left:521.1px"></div>
<span class="num" style="left:548.5px">200</span>
<div class="vl" style="left:548.5px"></div><div class="vl" style="left:575.9px"></div>
<span class="num" style="left:603.2px">210</span>
<div class="vl" style="left:603.2px"></div><div class="vl" style="left:630.5px"></div>
<span class="num" style="left:657.9px">220</span>
<div class="vl" style="left:657.9px"></div><div class="vl" style="left:685.2px"></div>
<span class="num" style="left:712.6px">230</span>
<div class="vl" style="left:712.6px"></div><div class="vl" style="left:740.0px"></div>
<span class="num" style="left:767.3px">240</span>
<div class="vl" style="left:767.3px"></div><div class="vl" style="left:794.6px"></div>
<span class="num" style="left:822.0px">250</span>
<div class="vl" style="left:822.0px"></div><div class="vl" style="left:849.4px"></div>
<div class="fld" style="left:64px;width:17px;top:3px"></div>
<div class="fld" style="left:88px;width:111px;top:3px"></div>
<div class="fld" style="left:598.500px;width:68.500px"><span class="t" style="left:31px">1</span></div>
<div class="fld" style="left:673px;width:16.500px;border-radius:3px 0 0 3px;background:#5e5e5e"></div>
<div class="fld" style="left:690px;width:81px;border-radius:0"><span class="t" style="left:15px">起始</span><span class="t" style="left:63px">1</span></div>
<div class="fld" style="left:772px;width:88px;border-radius:0 3px 3px 0"><span class="t" style="left:14px">结束点</span><span class="t" style="left:56px">250</span></div>
<svg class="ic" width="878" height="53" viewBox="0 0 878 53">
<circle cx="681.3" cy="12.500" r="4.500" stroke-width="1"/><path d="M681.3 10 v2.500 h2 M680 6.500 h2.600" stroke-width="1"/>
<circle cx="72.500" cy="11" r="2.200" fill="#ddd" stroke="none"/>
<g fill="#e8e8e8" stroke="none">
<path d="M96 11 l5 -3.500 v7z M95 7.500 h1.300 v7 h-1.300z"/>
<path d="M112 11 l4 -3.500 v7z M116 11 l4 -3.500 v7z"/>
<path d="M137 11 l-6 -3.500 v7z" transform="rotate(180 134 11)"/>
<path d="M154 11 l-6 -3.500 v7z"/>
<path d="M172 11 l-4 -3.500 v7z M176 11 l-4 -3.500 v7z"/>
<path d="M192 11 l-5 -3.500 v7z M192 7.500 h1.300 v7 h-1.300z"/>
</g>
<path d="M876 39.500 l-3 3.500 l3 3.500" stroke="#999" stroke-width="1"/>
</svg>
</div>
<div id="olb"><div></div></div><div id="ol">
<div class="row" style="top:24.0px"><svg class="ic" width="307" height="19" viewBox="0 0 307 19"><path d="M20.500 4.500 h12 v3 h-12z M21.500 7.500 v7.500 h10 v-7.500 M25 10.500 h3" stroke="#d8d8d8" stroke-width="1.1"/></svg><span class="t c" style="left:39.500px;top:5.300px;font-size:10.300px !important">场景集合</span></div>
<div class="row alt" style="top:42.6px"><svg class="ic" width="307" height="19" viewBox="0 0 307 19"><path d="M22.500 7 h7 l-3.500 5.500z" fill="#bdbdbd" stroke="none"/><rect x="40.500" y="4.500" width="9.500" height="9.500" rx="1.500" fill="#e6e6e6" stroke="none"/><path d="M42.500 9.500 l2 2 l3.500 -4.500" stroke="#222" stroke-width="1.500"/><rect x="54.500" y="0.500" width="19" height="17.600" rx="3.500" fill="#454545" stroke="none"/><path d="M58 4.500 h12 v3 h-12z M59 7.500 v7.500 h10 v-7.500 M62.500 10.500 h3" stroke="#e4e4e4" stroke-width="1.100"/><path d="M285.500 9.300 q6 -7.500 12 0 q-6 7.500 -12 0z" fill="#e0e0e0" stroke="none"/><circle cx="291.500" cy="9.300" r="2.700" fill="none" stroke="#282828" stroke-width="1.300"/></svg><span class="t" style="left:76.500px">Collection</span></div>
<div class="row" style="top:61.2px"><svg class="ic" width="307" height="19" viewBox="0 0 307 19"><path d="M44.500 0 v19" stroke="#555" stroke-width="1"/><path d="M44.500 9.500 h11" stroke="#777" stroke-width="1"/><path d="M43 7 l4.500 2.500 l-4.500 2.500z" fill="#c8c8c8" stroke="none"/><path d="M56.90 2.400 h13.300 l-6.650 13.500z M60.92 4.900 h5.260 l-2.630 5.340z" fill="#e0873e" fill-rule="evenodd" stroke="none"/><g stroke="#1fd29b" fill="none" stroke-width="1.1"><path d="M166.5 5 h8 l-4 9z"/><rect x="164.8" y="3.300" width="3" height="3" fill="#282828"/><rect x="173.2" y="3.300" width="3" height="3" fill="#282828"/><rect x="169" y="12.500" width="3" height="3" fill="#282828"/></g><path d="M285.500 9.300 q6 -7.500 12 0 q-6 7.500 -12 0z" fill="#e0e0e0" stroke="none"/><circle cx="291.500" cy="9.300" r="2.700" fill="none" stroke="#282828" stroke-width="1.300"/></svg><span class="t" style="left:76.500px">Boss-Extrude1</span></div>
<div class="row alt" style="top:79.8px"><svg class="ic" width="307" height="19" viewBox="0 0 307 19"><path d="M44.500 0 v19" stroke="#555" stroke-width="1"/><path d="M44.500 9.500 h11" stroke="#777" stroke-width="1"/><path d="M43 7 l4.500 2.500 l-4.500 2.500z" fill="#c8c8c8" stroke="none"/><g fill="#e98c3f" stroke="none"><rect x="57" y="9" width="9" height="6.500" rx="1"/><path d="M66 11 l4 -2 v6.500 l-4 -2z"/><circle cx="59.500" cy="6" r="2.600"/><circle cx="65" cy="5.500" r="3"/></g><rect x="131" y="0.500" width="19" height="17.600" rx="4" fill="#3d7a6c" stroke="none"/><g stroke="#25dca4" fill="none" stroke-width="1.1"><rect x="134.5" y="7.500" width="9" height="6.500" rx="1"/><path d="M143.5 9.500 l3.500 -1.800 v6 l-3.500 -1.800"/><circle cx="137" cy="5.200" r="2"/><circle cx="142" cy="4.800" r="2.400"/></g><path d="M285.500 9.300 q6 -7.500 12 0 q-6 7.500 -12 0z" fill="#e0e0e0" stroke="none"/><circle cx="291.500" cy="9.300" r="2.700" fill="none" stroke="#282828" stroke-width="1.300"/></svg><span class="t" style="left:76.500px">Camera</span></div>
<div class="row" style="top:98.4px"><svg class="ic" width="307" height="19" viewBox="0 0 307 19"><path d="M44.500 0 v19" stroke="#555" stroke-width="1"/><path d="M44.500 9.500 h11" stroke="#777" stroke-width="1"/><path d="M43 7 l4.500 2.500 l-4.500 2.500z" fill="#c8c8c8" stroke="none"/><path d="M56.90 2.400 h13.300 l-6.650 13.500z M60.92 4.900 h5.260 l-2.630 5.340z" fill="#e0873e" fill-rule="evenodd" stroke="none"/><g stroke="#1fd29b" fill="none" stroke-width="1.1"><path d="M147.5 5 h8 l-4 9z"/><rect x="145.8" y="3.300" width="3" height="3" fill="#282828"/><rect x="154.2" y="3.300" width="3" height="3" fill="#282828"/><rect x="150" y="12.500" width="3" height="3" fill="#282828"/></g><path d="M285.500 9.300 q6 -7.500 12 0 q-6 7.500 -12 0z" fill="#e0e0e0" stroke="none"/><circle cx="291.500" cy="9.300" r="2.700" fill="none" stroke="#282828" stroke-width="1.300"/></svg><span class="t" style="left:76.500px">Combine2</span></div>
<div class="row alt" style="top:117.0px"><svg class="ic" width="307" height="19" viewBox="0 0 307 19"><path d="M44.500 0 v19" stroke="#555" stroke-width="1"/><path d="M44.500 9.500 h11" stroke="#777" stroke-width="1"/><path d="M43 7 l4.500 2.500 l-4.500 2.500z" fill="#c8c8c8" stroke="none"/><path d="M56.90 2.400 h13.300 l-6.650 13.500z M60.92 4.900 h5.260 l-2.630 5.340z" fill="#e0873e" fill-rule="evenodd" stroke="none"/><g stroke="#1fd29b" fill="none" stroke-width="1.1"><path d="M170.0 5 h8 l-4 9z"/><rect x="168.3" y="3.300" width="3" height="3" fill="#282828"/><rect x="176.7" y="3.300" width="3" height="3" fill="#282828"/><rect x="172.5" y="12.500" width="3" height="3" fill="#282828"/></g><path d="M285.500 9.300 q6 -7.500 12 0 q-6 7.500 -12 0z" fill="#e0e0e0" stroke="none"/><circle cx="291.500" cy="9.300" r="2.700" fill="none" stroke="#282828" stroke-width="1.300"/></svg><span class="t" style="left:76.500px">Combine2.001</span></div>
<div class="row" style="top:135.6px"><svg class="ic" width="307" height="19" viewBox="0 0 307 19"><path d="M44.500 0 v19" stroke="#555" stroke-width="1"/><path d="M44.500 9.500 h11" stroke="#777" stroke-width="1"/><path d="M43 7 l4.500 2.500 l-4.500 2.500z" fill="#c8c8c8" stroke="none"/><path d="M56.90 2.400 h13.300 l-6.650 13.500z M60.92 4.900 h5.260 l-2.630 5.340z" fill="#e0873e" fill-rule="evenodd" stroke="none"/><g stroke="#1fd29b" fill="none" stroke-width="1.1"><path d="M160.5 5 h8 l-4 9z"/><rect x="158.8" y="3.300" width="3" height="3" fill="#282828"/><rect x="167.2" y="3.300" width="3" height="3" fill="#282828"/><rect x="163" y="12.500" width="3" height="3" fill="#282828"/></g><path d="M285.500 9.300 q6 -7.500 12 0 q-6 7.500 -12 0z" fill="#e0e0e0" stroke="none"/><circle cx="291.500" cy="9.300" r="2.700" fill="none" stroke="#282828" stroke-width="1.300"/></svg><span class="t" style="left:76.500px">Cut-Extrude4</span></div>
<div class="row alt" style="top:154.2px"><svg class="ic" width="307" height="19" viewBox="0 0 307 19"><path d="M44.500 0 v19" stroke="#555" stroke-width="1"/><path d="M44.500 9.500 h11" stroke="#777" stroke-width="1"/><path d="M43 7 l4.500 2.500 l-4.500 2.500z" fill="#c8c8c8" stroke="none"/><path d="M56.90 2.400 h13.300 l-6.650 13.500z M60.92 4.900 h5.260 l-2.630 5.340z" fill="#e0873e" fill-rule="evenodd" stroke="none"/><g stroke="#1fd29b" fill="none" stroke-width="1.1"><path d="M160.5 5 h8 l-4 9z"/><rect x="158.8" y="3.300" width="3" height="3" fill="#282828"/><rect x="167.2" y="3.300" width="3" height="3" fill="#282828"/><rect x="163" y="12.500" width="3" height="3" fill="#282828"/></g><path d="M285.500 9.300 q6 -7.500 12 0 q-6 7.500 -12 0z" fill="#e0e0e0" stroke="none"/><circle cx="291.500" cy="9.300" r="2.700" fill="none" stroke="#282828" stroke-width="1.300"/></svg><span class="t" style="left:76.500px">Cut-Extrude9</span></div>
<div class="row" style="top:172.8px"><svg class="ic" width="307" height="19" viewBox="0 0 307 19"><path d="M44.500 0 v19" stroke="#555" stroke-width="1"/><path d="M44.500 9.500 h11" stroke="#777" stroke-width="1"/><path d="M43 7 l4.500 2.500 l-4.500 2.500z" fill="#c8c8c8" stroke="none"/><g fill="#e98c3f" stroke="none"><circle cx="62.500" cy="8" r="4.800"/><rect x="60" y="12.500" width="5" height="3.500" rx="1"/></g><path d="M61 8.500 l1.500 2 l1.500 -2" stroke="#282828" stroke-width="0.900"/><g stroke="#1fd29b" fill="none" stroke-width="1.100"><circle cx="126.5" cy="9.300" r="5.800"/><path d="M126.5 9.300 v6" /><circle cx="126.5" cy="8.800" r="1.400" fill="#1fd29b"/></g><path d="M285.500 9.300 q6 -7.500 12 0 q-6 7.500 -12 0z" fill="#e0e0e0" stroke="none"/><circle cx="291.500" cy="9.300" r="2.700" fill="none" stroke="#282828" stroke-width="1.300"/></svg><span class="t" style="left:76.500px">Light</span></div>
<div class="row alt" style="top:191.4px"><svg class="ic" width="307" height="19" viewBox="0 0 307 19"><path d="M44.500 0 v19" stroke="#555" stroke-width="1"/><path d="M44.500 9.500 h11" stroke="#777" stroke-width="1"/><path d="M43 7 l4.500 2.500 l-4.500 2.500z" fill="#c8c8c8" stroke="none"/><path d="M56.90 2.400 h13.300 l-6.650 13.500z M60.92 4.900 h5.260 l-2.630 5.340z" fill="#e0873e" fill-rule="evenodd" stroke="none"/><g stroke="#1fd29b" fill="none" stroke-width="1.1"><path d="M143.5 5 h8 l-4 9z"/><rect x="141.8" y="3.300" width="3" height="3" fill="#282828"/><rect x="150.2" y="3.300" width="3" height="3" fill="#282828"/><rect x="146" y="12.500" width="3" height="3" fill="#282828"/></g><path d="M285.500 9.300 q6 -7.500 12 0 q-6 7.500 -12 0z" fill="#e0e0e0" stroke="none"/><circle cx="291.500" cy="9.300" r="2.700" fill="none" stroke="#282828" stroke-width="1.300"/></svg><span class="t" style="left:76.500px">Revolve2</span></div>
<div class="row" style="top:210.0px"><svg class="ic" width="307" height="19" viewBox="0 0 307 19"><path d="M44.500 0 v19" stroke="#555" stroke-width="1"/><path d="M44.500 9.500 h11" stroke="#777" stroke-width="1"/><path d="M43 7 l4.500 2.500 l-4.500 2.500z" fill="#c8c8c8" stroke="none"/><path d="M56.90 2.400 h13.300 l-6.650 13.500z M60.92 4.900 h5.260 l-2.630 5.340z" fill="#e0873e" fill-rule="evenodd" stroke="none"/><g stroke="#1fd29b" fill="none" stroke-width="1.1"><path d="M166.5 5 h8 l-4 9z"/><rect x="164.8" y="3.300" width="3" height="3" fill="#282828"/><rect x="173.2" y="3.300" width="3" height="3" fill="#282828"/><rect x="169" y="12.500" width="3" height="3" fill="#282828"/></g><path d="M285.500 9.300 q6 -7.500 12 0 q-6 7.500 -12 0z" fill="#e0e0e0" stroke="none"/><circle cx="291.500" cy="9.300" r="2.700" fill="none" stroke="#282828" stroke-width="1.300"/></svg><span class="t" style="left:76.500px">Revolve2.001</span></div>
<div class="row alt" style="top:228.6px"><svg class="ic" width="307" height="19" viewBox="0 0 307 19"><path d="M44.500 0 v19" stroke="#555" stroke-width="1"/><path d="M44.500 9.500 h11" stroke="#777" stroke-width="1"/><path d="M43 7 l4.500 2.500 l-4.500 2.500z" fill="#c8c8c8" stroke="none"/><path d="M56.90 2.400 h13.300 l-6.650 13.500z M60.92 4.900 h5.260 l-2.630 5.340z" fill="#e0873e" fill-rule="evenodd" stroke="none"/><g stroke="#1fd29b" fill="none" stroke-width="1.1"><path d="M166.5 5 h8 l-4 9z"/><rect x="164.8" y="3.300" width="3" height="3" fill="#282828"/><rect x="173.2" y="3.300" width="3" height="3" fill="#282828"/><rect x="169" y="12.500" width="3" height="3" fill="#282828"/></g><path d="M285.500 9.300 q6 -7.500 12 0 q-6 7.500 -12 0z" fill="#e0e0e0" stroke="none"/><circle cx="291.500" cy="9.300" r="2.700" fill="none" stroke="#282828" stroke-width="1.300"/></svg><span class="t" style="left:76.500px">Revolve2.002</span></div>
<div class="row" style="top:247.2px"><svg class="ic" width="307" height="19" viewBox="0 0 307 19"><path d="M44.500 0 v19" stroke="#555" stroke-width="1"/><path d="M44.500 9.500 h11" stroke="#777" stroke-width="1"/><path d="M43 7 l4.500 2.500 l-4.500 2.500z" fill="#c8c8c8" stroke="none"/><path d="M56.90 2.400 h13.300 l-6.650 13.500z M60.92 4.900 h5.260 l-2.630 5.340z" fill="#e0873e" fill-rule="evenodd" stroke="none"/><g stroke="#1fd29b" fill="none" stroke-width="1.1"><path d="M166.5 5 h8 l-4 9z"/><rect x="164.8" y="3.300" width="3" height="3" fill="#282828"/><rect x="173.2" y="3.300" width="3" height="3" fill="#282828"/><rect x="169" y="12.500" width="3" height="3" fill="#282828"/></g><path d="M285.500 9.300 q6 -7.500 12 0 q-6 7.500 -12 0z" fill="#e0e0e0" stroke="none"/><circle cx="291.500" cy="9.300" r="2.700" fill="none" stroke="#282828" stroke-width="1.300"/></svg><span class="t" style="left:76.500px">Revolve2.003</span></div>
<div class="row alt" style="top:265.8px"><svg class="ic" width="307" height="19" viewBox="0 0 307 19"><path d="M44.500 0 v19" stroke="#555" stroke-width="1"/><path d="M44.500 9.500 h11" stroke="#777" stroke-width="1"/><path d="M43 7 l4.500 2.500 l-4.500 2.500z" fill="#c8c8c8" stroke="none"/><path d="M56.90 2.400 h13.300 l-6.650 13.500z M60.92 4.900 h5.260 l-2.630 5.340z" fill="#e0873e" fill-rule="evenodd" stroke="none"/><g stroke="#1fd29b" fill="none" stroke-width="1.1"><path d="M166.5 5 h8 l-4 9z"/><rect x="164.8" y="3.300" width="3" height="3" fill="#282828"/><rect x="173.2" y="3.300" width="3" height="3" fill="#282828"/><rect x="169" y="12.500" width="3" height="3" fill="#282828"/></g><path d="M285.500 9.300 q6 -7.500 12 0 q-6 7.500 -12 0z" fill="#e0e0e0" stroke="none"/><circle cx="291.500" cy="9.300" r="2.700" fill="none" stroke="#282828" stroke-width="1.300"/></svg><span class="t" style="left:76.500px">Revolve2.004</span></div>
<div class="row" style="top:284.4px"><svg class="ic" width="307" height="19" viewBox="0 0 307 19"><path d="M44.500 0 v19" stroke="#555" stroke-width="1"/><path d="M44.500 9.500 h11" stroke="#777" stroke-width="1"/><path d="M43 7 l4.500 2.500 l-4.500 2.500z" fill="#c8c8c8" stroke="none"/><path d="M56.90 2.400 h13.300 l-6.650 13.500z M60.92 4.900 h5.260 l-2.630 5.340z" fill="#e0873e" fill-rule="evenodd" stroke="none"/><g stroke="#1fd29b" fill="none" stroke-width="1.1"><path d="M166.5 5 h8 l-4 9z"/><rect x="164.8" y="3.300" width="3" height="3" fill="#282828"/><rect x="173.2" y="3.300" width="3" height="3" fill="#282828"/><rect x="169" y="12.500" width="3" height="3" fill="#282828"/></g><path d="M285.500 9.300 q6 -7.500 12 0 q-6 7.500 -12 0z" fill="#e0e0e0" stroke="none"/><circle cx="291.500" cy="9.300" r="2.700" fill="none" stroke="#282828" stroke-width="1.300"/></svg><span class="t" style="left:76.500px">Revolve2.005</span></div>
<div id="olhead"></div>
<div class="box" style="left:8px;top:3px;width:27px;height:16px;background:#2b2b2b"></div>
<div class="box" style="left:45px;top:3px;width:25px;height:16px;background:#2b2b2b"></div>
<div class="box" style="left:90.500px;top:3px;width:102px;height:16px;background:#232323"></div>
<div class="box" style="left:248px;top:3px;width:27px;height:16px;background:#2b2b2b"></div>
<div class="box" style="left:281.500px;top:3px;width:19px;height:16px;background:#555"></div>
<svg class="ic" width="307" height="26" viewBox="0 2 307 26">
<path d="M12.500 8.500 h4 M14.500 9 v8.500 h3 M14.500 13 h3" stroke-width="1"/><rect x="18" y="11.500" width="5.500" height="2.500" fill="#ddd" stroke="none"/><rect x="18" y="16" width="5.500" height="2.500" fill="#ddd" stroke="none"/><rect x="11.500" y="7.500" width="5" height="2.500" fill="#ddd" stroke="none"/>
<path d="M26 11.500 l2.500 2.500 l2.500 -2.500"/>
<rect x="52" y="8" width="8.500" height="8.500" rx="1" stroke-width="1"/><path d="M50 10 v8.500 h8.500" stroke-width="1"/><path d="M53.500 15 l2.500 -3 l1.500 2 l1 -1 l1.500 2z" fill="#ddd" stroke="none"/>
<path d="M62 11.500 l2.500 2.500 l2.500 -2.500"/>
<circle cx="103.500" cy="11.500" r="3.800" stroke-width="1.300"/><path d="M101 14.500 l-3.500 4" stroke-width="1.600"/>
<path d="M253 8 h10 l-4 5 v5 l-2 -1 v-4z" stroke-width="1.100"/>
<path d="M266 11.500 l2.500 2.500 l2.500 -2.500"/>
<path d="M285 9 h8 v2.500 h-8z M286 11.500 v6.500 h7 v-4" stroke-width="1"/><circle cx="295.500" cy="9.500" r="3.300" fill="#eee" stroke="none"/><path d="M293.800 9.500 h3.400 M295.500 7.800 v3.400" stroke="#444" stroke-width="1"/>
</svg>
</div>
<div id="prb"><div></div></div><div id="pr"><div id="prhead"></div>
<div id="prtabs">
<div class="tb" style="top:11px;height:19px"></div>
<div class="tb" style="top:42px;height:20px"></div>
<div class="tb" style="top:69px;height:20px"></div>
<div class="tb" style="top:95px;height:20px"></div>
<div class="tb on" style="top:119px;height:25px"></div>
<div class="tb" style="top:148px;height:20px"></div>
<div class="tb" style="top:189px;height:20px"></div>
</div>
<div class="box" style="left:8px;top:4px;width:27px;height:17px;background:#2b2b2b"></div>
<span class="pt" style="left:70px;top:7px;font-size:10px;letter-spacing:-0.45px">Scene</span>
<div class="panelh" style="top:24px;height:22px"></div><div class="panelb" style="top:46px;height:81px"></div>
<div class="panelh" style="top:127px;height:22px"></div><div class="panelb" style="top:149px;height:161px"></div>
<div class="tri d" style="left:32px;top:33px"></div><span class="pt" style="left:45px;top:30.700px">场景</span><div class="grip" style="top:33px"></div>
<div class="tri d" style="left:32px;top:135px"></div><span class="pt" style="left:45px;top:132.700px">单位</span><div class="grip" style="top:135px"></div>
<span class="lbl" style="left:38px;top:58.0px">相机</span><div class="fld" style="top:54.5px"><span class="t" style="left:23px">Camera</span></div>
<span class="lbl" style="left:38px;top:81.0px">背景场景</span><div class="fld" style="top:77.5px"></div>
<span class="lbl" style="left:38px;top:104.0px">活动剪辑</span><div class="fld" style="top:100.5px"></div>
<span class="lbl" style="left:38px;top:160.5px">单位系统</span><div class="fld" style="top:157.0px"><span class="t c" style="left:7px">公制</span></div>
<span class="lbl" style="left:38px;top:183.5px">缩放单位</span><div class="fld" style="top:180.0px;background:#545454"><span class="t" style="left:0;width:132px;text-align:center;letter-spacing:0.1px">1.000000</span></div>
<span class="lbl" style="left:156px;top:204.500px">分离单位</span><div style="position:absolute;left:285px;top:203px;width:11px;height:11px;border-radius:2.500px;background:#5f5f5f"></div>
<span class="lbl" style="left:38px;top:227.5px">旋转</span><div class="fld" style="top:224.0px"><span class="t c" style="left:7px">角度</span></div>
<span class="lbl" style="left:38px;top:248.0px">长度</span><div class="fld" style="top:244.5px"><span class="t c" style="left:7px">毫米</span></div>
<span class="lbl" style="left:38px;top:268.3px">质量</span><div class="fld" style="top:264.8px"><span class="t" style="left:7px">Kilograms</span></div>
<span class="lbl" style="left:38px;top:288.8px">时间</span><div class="fld" style="top:285.3px"><span class="t c" style="left:7px">秒</span></div>
<div class="tri r" style="left:33px;top:317.0px"></div><div class="grip" style="top:318.0px"></div>
<div style="position:absolute;left:46px;top:315.0px;width:12px;height:12px;border-radius:2.500px;background:#4772b3"></div><span class="pt" style="left:63.500px;top:315.5px">重力</span>
<div class="tri r" style="left:33px;top:340.3px"></div><div class="grip" style="top:341.3px"></div>
<span class="pt" style="left:45px;top:338.8px">插帧集</span>
<div class="tri r" style="left:33px;top:362.3px"></div><div class="grip" style="top:363.3px"></div>
<span class="pt" style="left:45px;top:360.8px">音频</span>
<div class="tri r" style="left:33px;top:384.5px"></div><div class="grip" style="top:385.5px"></div>
<span class="pt" style="left:45px;top:383.0px">刚体世界环境</span>
<div class="tri r" style="left:33px;top:407.0px"></div><div class="grip" style="top:408.0px"></div>
<span class="pt" style="left:45px;top:405.5px">自定义属性</span>
<svg class="ic" width="307" height="594" viewBox="0 0 307 594">
<!-- editor type -->
<rect x="12" y="7" width="10" height="4.500" rx="2.200" stroke-width="1"/><rect x="12" y="13.500" width="10" height="4.500" rx="2.200" stroke-width="1"/><circle cx="14.500" cy="9.300" r="1.200" fill="#ddd" stroke="none"/><circle cx="19.500" cy="15.800" r="1.200" fill="#ddd" stroke="none"/>
<path d="M26 11 l2.500 2.500 l2.500 -2.500"/>
<!-- scene icon header -->
<g id="scn"><path d="M50.500 14 l3 -7.500 l3 7.500 a3 3 0 0 1 -6 0z" fill="#e0e0e0" stroke="none"/><circle cx="59.500" cy="8" r="1.700" fill="#e0e0e0" stroke="none"/><circle cx="59" cy="14.500" r="3" fill="#444" stroke="#e0e0e0" stroke-width="1.100"/></g>
<!-- pin -->
<path d="M291.500 9.500 L294.500 6.200 L298.300 10 L295 13 M290 8.800 L296 14.800 M290.800 9.600 L289.500 13 L292 15.500 L295.300 14.100 M290.500 14.500 L285.500 19.500" stroke="#8e8e8e" stroke-width="1.200"/>
<!-- tabs icons -->
<g fill="#e0e0e0" stroke="none">
<path d="M8.500 39 h2 v7 a1.500 1.500 0 0 1 -0.500 3 v3 a1.200 1.200 0 0 1 -2.400 0 v-3 a1.500 1.500 0 0 1 0.900 -3z"/>
<path d="M14 39 v4 l2 2 v7 a1.200 1.200 0 0 0 2.400 0 v-7 l2 -2 v-4 h-1.400 v3.500 h-1 v-3.500 h-1 v3.500 h-1 v-3.500z" transform="translate(0,0) scale(1)"/>
</g>
<g stroke="#e0e0e0" stroke-width="1.200" fill="none">
<rect x="7.500" y="72" width="12" height="9.500" rx="1"/><path d="M10 72 v-2.500 h4 v2.500"/><rect x="14" y="74.500" width="3.500" height="3.500" fill="#e0e0e0" stroke="none"/>
<path d="M7.500 99 h12 v5 h-12z M9.500 104 v6 h8 v-6"/><rect x="11.500" y="105.500" width="4" height="3" fill="#e0e0e0" stroke="none"/>
<rect x="10" y="123.500" width="9.500" height="9.500" rx="1"/><path d="M8 126 v9.500 h9.500"/><path d="M11.500 131.500 l3 -4 l1.500 2 l1 -1 l1.500 3z" fill="#e0e0e0" stroke="none"/>
</g>
<g><path d="M6.500 157.500 l3.500 -8 l3.500 8 a3.500 3.500 0 0 1 -7 0z" fill="#e6e6e6" stroke="none"/><circle cx="16.500" cy="150.500" r="1.900" fill="#e6e6e6" stroke="none"/><circle cx="16" cy="158" r="3.300" fill="#444" stroke="#e6e6e6" stroke-width="1.200"/></g>
<g stroke="#d0485b" stroke-width="1.300" fill="none"><circle cx="13.500" cy="182" r="6.200"/><path d="M10 177.500 q3 2 1 4 q-1 2 1.500 3 q1 2 -1 3 M15.500 176 q-1 3 2 4 q2 1 1.500 3" stroke-width="1.500"/></g>
<g fill="#cc5263" stroke="none"><rect x="7" y="215.500" width="13" height="13" rx="1" fill="none" stroke="#cc5263" stroke-width="1"/>
<rect x="7" y="215.500" width="3.300" height="3.300"/><rect x="13.500" y="215.500" width="3.300" height="3.300"/><rect x="10.200" y="218.800" width="3.300" height="3.300"/><rect x="16.700" y="218.800" width="3.300" height="3.300"/><rect x="7" y="222" width="3.300" height="3.300"/><rect x="13.500" y="222" width="3.300" height="3.300"/><rect x="10.200" y="225.200" width="3.300" height="3.300"/><rect x="16.700" y="225.200" width="3.300" height="3.300"/></g>
<!-- field icons -->
<rect x="171.500" y="57.500" width="10" height="10" rx="1" stroke-dasharray="3 4" stroke-dashoffset="1.500" stroke="#e0e0e0" stroke-width="1.300"/><rect x="174" y="60" width="5" height="5" fill="#e8e8e8" stroke="none"/>
<path d="M287.500 59 l6.500 6.500 m0 -6.500 l-6.500 6.500" stroke="#e8e8e8" stroke-width="1.300"/>
<g><path d="M170.500 89 l2.800 -6.500 l2.800 6.500 a2.800 2.800 0 0 1 -5.600 0z" fill="#e0e0e0" stroke="none"/><circle cx="178.500" cy="83.500" r="1.500" fill="#e0e0e0" stroke="none"/><circle cx="178" cy="89.500" r="2.700" fill="#2a2a2a" stroke="#e0e0e0" stroke-width="1"/></g>
<g fill="#e0e0e0" stroke="none"><rect x="171" y="107" width="10.500" height="7" /><path d="M171 106 l10 -3.500 l0.500 1.800 l-10 3.500z"/></g>
<!-- dropdown chevrons -->
<g stroke="#e0e0e0" stroke-width="1.300"><path d="M290 163.500 l2.800 2.800 l2.800 -2.800"/><path d="M290 230.500 l2.800 2.800 l2.800 -2.800"/><path d="M290 251 l2.800 2.800 l2.800 -2.800"/><path d="M290 271.300 l2.800 2.800 l2.800 -2.800"/><path d="M290 291.800 l2.800 2.800 l2.800 -2.800"/></g>
<path d="M48.500 321 l2.500 2.800 l4.500 -5.500" stroke="#fff" stroke-width="1.600"/>
</svg>
</div>
<!-- watermarks -->
<div class="vdash" style="left:339px"></div><div class="vdash" style="left:923px"></div>
<div class="wm big" style="left:62px;top:34.500px">摩尔网</div><div class="wm sm" style="left:64px;top:75px">WWW.CGMOL.COM</div>
<div class="wm big" style="left:1096px;top:34.500px">摩尔网</div><div class="wm sm" style="left:1098px;top:75px">WWW.CGMOL.COM</div>
<div class="wm big" style="left:597px;top:352px">摩尔网</div><div class="wm sm" style="left:599px;top:393px">WWW.CGMOL.COM</div>
<div class="wm big" style="left:62px;top:640.500px">摩尔网</div><div class="wm sm" style="left:64px;top:681.500px">WWW.CGMOL.COM</div>
<div class="wm big" style="left:1096px;top:640.500px">摩尔网</div><div class="wm sm" style="left:1098px;top:681.500px">WWW.CGMOL.COM</div>
<div class="wm wide" style="left:514px;top:193px">WWW.CGMOL.COM</div>
<div class="wm wide" style="left:25px;top:369px">WWW.CGMOL.COM</div>
<div class="wm wide" style="left:514px;top:569px">WWW.CGMOL.COM</div>
<div class="wm wide" style="left:1000px;top:369px">WWW.CGMOL.COM</div>
<div class="wm wide" style="left:1000px;top:889px">WWW.CGMOL.COM</div>
<div class="wm wide" style="left:25px;top:889px">WWW.CGMOL.COM</div>
<div class="dash" style="left:180px;top:57px;width:150px"></div>
<div class="dash" style="left:345px;top:199px;width:160px"></div>
<div class="dash" style="left:765px;top:199px;width:110px"></div>
<div class="dash" style="left:272px;top:377px;width:150px"></div>
<div class="dash" style="left:345px;top:576px;width:160px"></div>
<div class="dash" style="left:765px;top:576px;width:110px"></div>
<div class="dash" style="left:180px;top:664px;width:150px"></div>
<div class="dash" style="left:1000px;top:58px;width:88px"></div>
<div class="dash" style="left:920px;top:664px;width:170px"></div>
<div class="dash" style="left:926px;top:375.500px;width:55px"></div>
<div class="dash" style="left:885px;top:199px;width:40px"></div>
<div class="dash" style="left:885px;top:576px;width:35px"></div>
<div class="dash" style="left:926px;top:897px;width:55px"></div>
<div class="dash" style="left:272px;top:897px;width:150px"></div>
<div class="t" style="left:40px;top:849.300px;font-family:'Liberation Sans','Noto Sans CJK SC',sans-serif;font-size:25px;color:#c8c8c8;letter-spacing:0.2px"><span style="font-size:23.600px">摩尔网</span><span style="letter-spacing:0.400px"> www.cgmol.com </span><span style="letter-spacing:0.100px">20251030082004486579</span></div>
</body>
</html>
